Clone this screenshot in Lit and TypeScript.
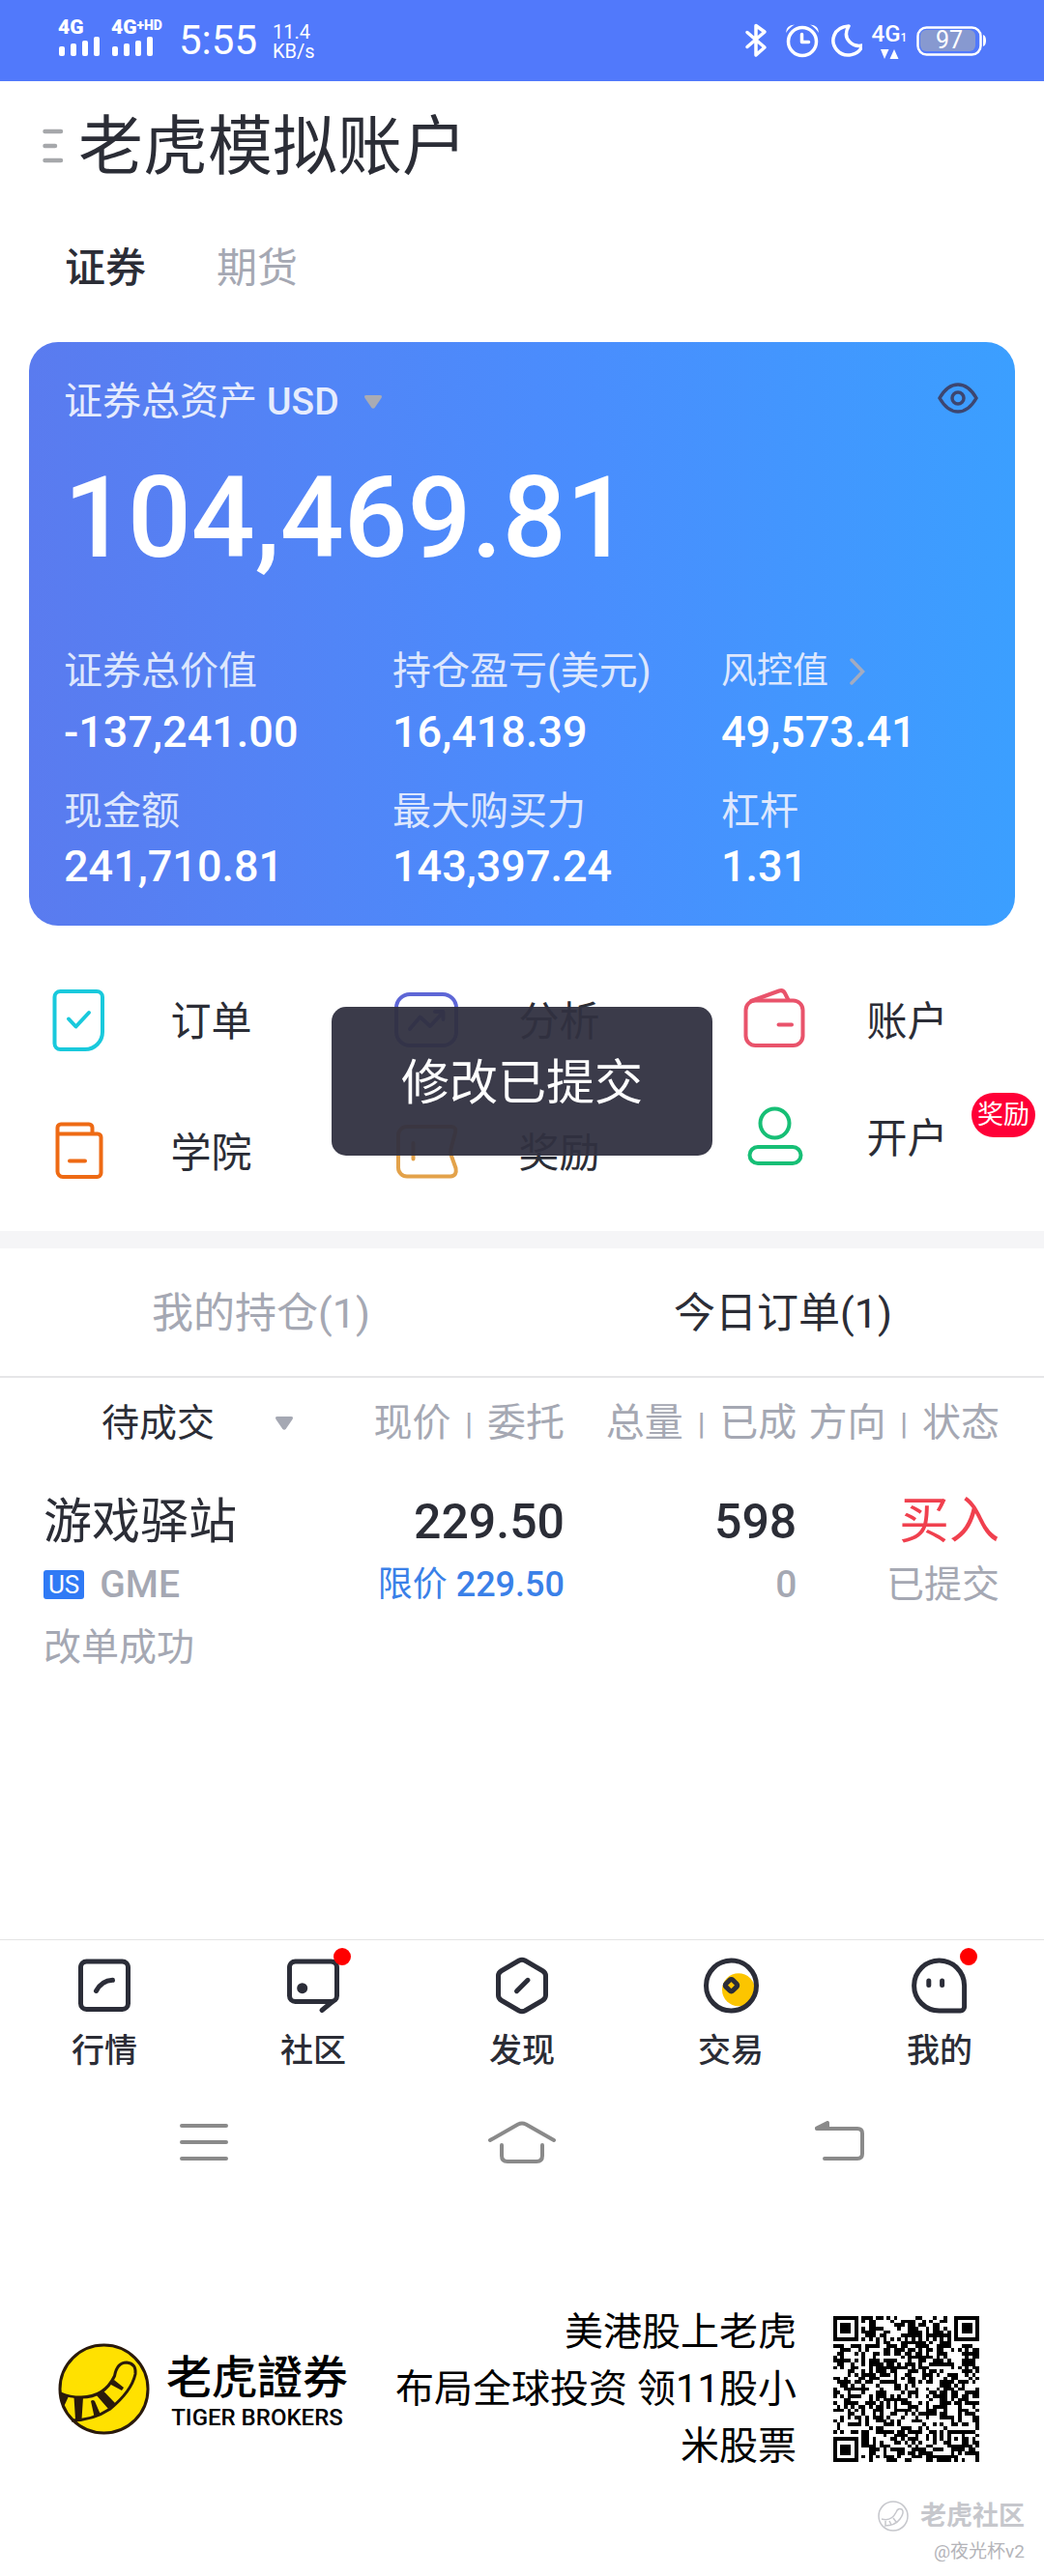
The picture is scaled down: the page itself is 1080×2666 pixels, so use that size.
import { LitElement, html, css, svg } from "lit";
import { customElement, property, state } from "lit/decorators.js";
import { classMap } from "lit/directives/class-map.js";

const actionIcons: Record<string, unknown> = {
  order: svg`<g stroke="#19c9dc"><path d="M17.500 6H55a6 6 0 0 1 6 6V48a18 18 0 0 1-18 18H17.500a6 6 0 0 1-6-6V12a6 6 0 0 1 6-6z"/><path d="M26 34.500L33.500 42.500 47 28"/></g>`,
  analysis: svg`<g stroke="#5e66d6"><rect x="5" y="9" width="62" height="53" rx="14"/><path d="M19 45L29.500 32.500 40 42 53 28M45 27H53.500V35"/></g>`,
  account: svg`<g stroke="#e9536b"><rect x="6.500" y="15.500" width="59" height="46.500" rx="10"/><path d="M12 16L41 5.500Q45 4 47 8L50.500 15M40.500 40.500H54"/></g>`,
  academy: svg`<g stroke="#ee6a14"><path d="M14.500 54V11a3.500 3.500 0 0 1 3.500-3.500H47a3.500 3.500 0 0 1 3.500 3.500V17.500M14.500 17.500H56a3.500 3.500 0 0 1 3.500 3.500V58a4 4 0 0 1-4 4H20a5.500 5.500 0 0 1-5.500-5.500V17.500M27 45.500H43"/></g>`,
  reward: svg`<g stroke="#e3a24a"><path d="M16 10H62Q67.500 10.500 66 16L61.500 33Q60.700 36 61.500 39L66.500 53Q68 61 61 61.500H16a9 9 0 0 1-9-9V19a9 9 0 0 1 9-9zM22.500 27V43.500"/></g>`,
  open: svg`<g stroke="#17bf76"><circle cx="36.500" cy="21.500" r="15"/><rect x="10.500" y="46" width="53" height="17" rx="8.500"/></g>`,
};

const navIcons: Record<string, unknown> = {
  quotes: svg`<rect x="5.500" y="5" width="49" height="49.500" rx="6"/><path d="M21.500 35.500Q27 25 38.500 24.300"/>`,
  community: svg`<rect x="5.500" y="5" width="49" height="41.500" rx="6"/><path d="M50 46.500L39 55.500"/><circle class="solid" cx="18.700" cy="32.700" r="5.500"/>`,
  discover: svg`<path d="M27 4Q30 2.500 33 4L51 14.500Q54.500 16.500 54.500 20V40Q54.500 43.500 51 45.500L33 56Q30 57.500 27 56L9 45.500Q5.500 43.500 5.500 40V20Q5.500 16.500 9 14.500z"/><path d="M24.500 35.700L36 24.300"/>`,
  trade: svg`<circle class="coin" cx="38" cy="34.300" r="17"/><circle cx="30.500" cy="30" r="26"/><rect x="25.500" y="24.700" width="10" height="10" rx="2" transform="rotate(45 30.500 29.700)"/>`,
  mine: svg`<path d="M29.600 4A26 26 0 0 1 55.600 30V52a4 4 0 0 1-4 4H29.600A26 26 0 0 1 29.600 4z"/><path d="M18.800 25V29.500M32.600 25V29.500"/>`,
};

@customElement("status-bar")
class StatusBar extends LitElement {
  static styles = css`
    :host {
      display: flex;
      align-items: center;
      justify-content: space-between;
      height: 84px;
      padding: 0 60px;
      background: #5179fb;
      color: #fff;
      font-family: Roboto, "Liberation Sans", sans-serif;
    }
    .left, .right { display: flex; align-items: center; }
    .right { gap: 10px; }
    .signal { display: flex; flex-direction: column; width: 55px; margin-top: -7px; }
    .net { font-size: 21px; line-height: 19px; font-weight: 900; white-space: nowrap; }
    .net sup { font-size: 14px; line-height: 14px; vertical-align: top; }
    .time { margin-left: 15px; font-size: 42px; line-height: 84px; }
    .speed { margin-left: 16px; font-size: 20px; line-height: 20px; padding-top: 2px; }
    .mobile { width: 36px; display: flex; flex-direction: column; align-items: center; }
    .mobile span { font-size: 24px; line-height: 24px; font-weight: 500; white-space: nowrap; }
    .mobile small { font-size: 12px; }
    svg { display: block; fill: none; stroke: #fff; stroke-width: 3.5; stroke-linecap: round; stroke-linejoin: round; }
    .fill { fill: #fff; stroke: none; }
    .battery { position: relative; }
    .level {
      position: absolute;
      inset: 0 4px 0 0;
      font-size: 25px;
      line-height: 32px;
      text-align: center;
    }
  `;

  private bars() {
    return html`<svg width="44" height="20" viewBox="0 0 44 20" aria-hidden="true">
      <g class="fill"><rect x="1" y="10" width="6" height="10" rx="2"/><rect x="13" y="7" width="6" height="13" rx="2"/><rect x="25" y="4" width="6" height="16" rx="2"/><rect x="37" y="0" width="6" height="20" rx="2"/></g>
    </svg>`;
  }

  render() {
    return html`
      <div class="left">
        <div class="signal"><span class="net">4G</span>${this.bars()}</div>
        <div class="signal"><span class="net">4G<sup>+HD</sup></span>${this.bars()}</div>
        <span class="time">5:55</span>
        <span class="speed">11.4<br />KB/s</span>
      </div>
      <div class="right">
        <svg width="32" height="38" viewBox="0 0 32 38" aria-label="蓝牙"><path d="M3 10.500L21 26 12 34V3.500L21 10 3 25.500"/></svg>
        <svg width="36" height="38" viewBox="0 0 36 38" aria-label="闹钟"><circle cx="18" cy="20" r="14.500"/><path d="M17.500 12.500V20.500H24.500"/><path class="fill" d="M1 11Q1 3 10 2.500Q5 5 1 11zM35 11Q35 3 26 2.500Q31 5 35 11z"/></svg>
        <svg width="34" height="38" viewBox="0 0 34 38" aria-label="勿扰"><path d="M20 4C4 5 0 20 8 29C16 38 31 34 34 24C25 26 12 18 20 4z"/></svg>
        <div class="mobile">
          <span>4G<small>1</small></span>
          <svg width="20" height="10" viewBox="0 0 20 10" aria-hidden="true"><path class="fill" d="M1 0H9.500L5 10zM10.500 10L15 0 19.500 10z"/></svg>
        </div>
        <div class="battery">
          <svg width="72" height="32" viewBox="0 0 72 32" aria-hidden="true">
            <rect x="4" y="5" width="57" height="22" rx="6" fill="#8799d0" stroke="none"/>
            <rect x="1.500" y="2.500" width="65" height="28" rx="9" stroke-width="2.500"/>
            <path class="fill" d="M69 10Q72 11 72 16T69 22z"/>
          </svg>
          <span class="level">97</span>
        </div>
      </div>
    `;
  }
}

@customElement("asset-card")
class AssetCard extends LitElement {
  static styles = css`
    :host {
      display: block;
      margin: 0 30px;
      padding: 32px 0 33px;
      border-radius: 30px;
      background: linear-gradient(90deg, #5a7bef, #4a8dfd 55%, #3b9fff);
      color: #fff;
      font-family: Roboto, "Noto Sans CJK SC", sans-serif;
    }
    .top { display: flex; align-items: center; justify-content: space-between; padding: 0 38px 0 36px; line-height: 60px; }
    label { display: flex; align-items: center; font-size: 40px; color: #e6ecfd; }
    select {
      appearance: none;
      border: 0;
      padding: 0;
      margin: 0 26px 0 10px;
      background: none;
      color: inherit;
      font: 500 39px/60px Roboto, sans-serif;
    }
    button { border: 0; padding: 0; background: none; }
    svg { display: block; }
    .total { padding: 0 36px; margin: 30px 0 70px; font-size: 116px; line-height: 120px; font-weight: 500; }
    dl { display: grid; grid-template-columns: repeat(3, 1fr); margin: 0; row-gap: 25px; }
    .item { padding-left: 36px; line-height: 57px; }
    .item.lead { display: grid; row-gap: 6px; }
    dt { display: flex; align-items: center; gap: 22px; font-size: 40px; color: #dde7fd; white-space: nowrap; }
    dt.compact { font-size: 37px; }
    dd { margin: 0; font-size: 45px; font-weight: 500; }
  `;

  private items = [
    ["证券总价值", "-137,241.00"],
    ["持仓盈亏(美元)", "16,418.39"],
    ["风控值", "49,573.41"],
    ["现金额", "241,710.81"],
    ["最大购买力", "143,397.24"],
    ["杠杆", "1.31"],
  ];

  render() {
    return html`
      <div class="top">
        <label>证券总资产
          <select><option>USD</option></select>
          <svg width="18" height="14" viewBox="0 0 18 14" aria-hidden="true"><path d="M2 0H16Q19 0 17.500 3L11 12.500Q9 15 7 12.500L.5 3Q-1 0 2 0z" fill="#a9abb4"/></svg>
        </label>
        <button aria-label="隐藏金额">
          <svg width="42" height="40" viewBox="0 0 42 40" fill="none" stroke="#3d4670" stroke-width="3.500"><path d="M2 16Q10 2 21 2T40 16Q32 30 21 30T2 16z"/><circle cx="21" cy="16" r="6"/></svg>
        </button>
      </div>
      <div class="total">104,469.81</div>
      <dl>
        ${this.items.map(
          ([label, value], i) => html`<div class=${classMap({ item: true, lead: i < 3 })}>
            <dt class=${classMap({ compact: label === "风控值" })}>${label}${label === "风控值"
              ? html`<svg width="16" height="28" viewBox="0 0 16 28" fill="none" stroke="#a3abc0" stroke-width="3.500" stroke-linecap="round"><path d="M2 2L13.500 14 2 26"/></svg>`
              : ""}</dt>
            <dd>${value}</dd>
          </div>`,
        )}
      </dl>
    `;
  }
}

@customElement("quick-actions")
class QuickActions extends LitElement {
  static styles = css`
    :host {
      position: relative;
      display: grid;
      grid-template-columns: repeat(3, 1fr);
      grid-auto-rows: 136px;
      padding: 30px 0 14px;
      color: #2b2d36;
      font-family: Roboto, "Noto Sans CJK SC", sans-serif;
    }
    a { position: relative; display: grid; grid-template-columns: 49% 51%; align-items: center; color: inherit; text-decoration: none; font-size: 42px; line-height: 60px; }
    a.raised { height: 106px; }
    .label { padding-top: 3px; }
    svg { display: block; margin-left: 45px; fill: none; stroke-width: 4; stroke-linecap: round; stroke-linejoin: round; }
    .badge {
      position: absolute;
      right: 9px;
      top: 7px;
      padding: 0 6px;
      border-radius: 23px;
      background: #ff0037;
      color: #fff;
      font-size: 27px;
      line-height: 46px;
    }
    .toast {
      position: absolute;
      left: 50%;
      top: 84px;
      transform: translateX(-50%);
      padding: 49px 72px 45px;
      border-radius: 15px;
      background: rgba(48, 48, 64, 0.95);
      color: #fff;
      font-size: 50px;
      line-height: 60px;
      white-space: nowrap;
    }
  `;

  private actions = [
    { icon: "order", label: "订单" },
    { icon: "analysis", label: "分析" },
    { icon: "account", label: "账户" },
    { icon: "academy", label: "学院" },
    { icon: "reward", label: "奖励" },
    { icon: "open", label: "开户", badge: "奖励" },
  ];

  render() {
    return html`
      ${this.actions.map(
        (a) => html`<a href="#${a.icon}" class=${classMap({ raised: !!a.badge })}>
          <svg width="72" height="72" viewBox="0 0 72 72" aria-hidden="true">${actionIcons[a.icon]}</svg>
          <span class="label">${a.label}</span>
          ${a.badge ? html`<span class="badge">${a.badge}</span>` : ""}
        </a>`,
      )}
      <div class="toast" role="status">修改已提交</div>
    `;
  }
}

@customElement("order-panel")
class OrderPanel extends LitElement {
  static styles = css`
    :host { display: block; border-top: 18px solid #f5f5f7; color: #2b2d36; font-family: Roboto, "Noto Sans CJK SC", sans-serif; }
    .tabs { display: grid; grid-template-columns: 1fr 1fr; border-bottom: 2px solid #e6e6e8; }
    .tabs button { border: 0; padding: 2px 0 0; background: none; font: inherit; font-size: 43px; line-height: 130px; color: #a5a8b3; }
    .tabs button.active { color: #2b2d36; }
    .list { padding: 0 46px 0 45px; }
    table { width: 100%; table-layout: fixed; border-collapse: collapse; }
    th, td { padding: 0; text-align: right; font-weight: 400; white-space: nowrap; }
    th { height: 94px; font-size: 40px; line-height: 60px; color: #a5a8b3; }
    td { padding-top: 25px; vertical-align: top; line-height: 60px; }
    th:first-child, td:first-child { text-align: left; width: 30%; }
    th:nth-child(2) { width: 24.5%; }
    th:nth-child(3) { width: 24.3%; }
    .sep { margin: 0 5px; font-size: 31px; font-weight: 500; vertical-align: 2px; }
    .filter { display: flex; align-items: center; gap: 62px; padding-left: 60px; }
    select { appearance: none; border: 0; padding: 0; background: none; font: 400 39px/60px Roboto, "Noto Sans CJK SC", sans-serif; color: #2b2d36; }
    .main { font-size: 50px; }
    .num { font-weight: 500; }
    .sub { margin-top: 5px; font-size: 39px; color: #a5a8b3; }
    .buy { color: #f0404e; font-size: 52px; }
    .limit { color: #3a80e8; font-size: 36px; }
    .symbol { display: flex; align-items: center; gap: 16px; font-weight: 500; }
    .market { padding: 0 5px; border-radius: 3px; background: #2f7af5; color: #fff; font-size: 26px; line-height: 30px; font-weight: 400; }
  `;

  @property({ attribute: false }) orders = [
    { name: "游戏驿站", market: "US", symbol: "GME", note: "改单成功", price: "229.50", limit: "229.50", total: "598", filled: "0", side: "买入", status: "已提交" },
  ];

  @state() private tab = 1;

  private columns = [
    ["现价", "委托"],
    ["总量", "已成"],
    ["方向", "状态"],
  ];

  render() {
    return html`
      <div class="tabs" role="tablist">
        ${["我的持仓(1)", "今日订单(1)"].map(
          (t, i) => html`<button role="tab" aria-selected=${this.tab === i} class=${classMap({ active: this.tab === i })} @click=${() => (this.tab = i)}>${t}</button>`,
        )}
      </div>
      <div class="list">
        <table>
          <thead>
            <tr>
              <th scope="col"><label class="filter"><select aria-label="订单状态"><option>待成交</option></select>
                <svg width="18" height="14" viewBox="0 0 18 14" aria-hidden="true"><path d="M2 0H16Q19 0 17.500 3L11 12.500Q9 15 7 12.500L.5 3Q-1 0 2 0z" fill="#a5a8b3"/></svg></label></th>
              ${this.columns.map(([a, b]) => html`<th scope="col">${a} <span class="sep">|</span> ${b}</th>`)}
            </tr>
          </thead>
          <tbody>
            ${this.orders.map(
              (o) => html`<tr>
                <td>
                  <div class="main">${o.name}</div>
                  <div class="sub symbol"><span class="market">${o.market}</span>${o.symbol}</div>
                  <div class="sub">${o.note}</div>
                </td>
                <td><div class="main num">${o.price}</div><div class="sub limit">限价 <span class="num">${o.limit}</span></div></td>
                <td><div class="main num">${o.total}</div><div class="sub num">${o.filled}</div></td>
                <td><div class="main buy">${o.side}</div><div class="sub">${o.status}</div></td>
              </tr>`,
            )}
          </tbody>
        </table>
      </div>
    `;
  }
}

@customElement("bottom-nav")
class BottomNav extends LitElement {
  static styles = css`
    :host { display: block; color: #2b2d36; font-family: "Noto Sans CJK SC", sans-serif; }
    nav { display: grid; grid-template-columns: repeat(5, 1fr); border-top: 1px solid #e4e4e4; padding: 17px 0 2px; }
    a { display: flex; flex-direction: column; align-items: center; gap: 15px; color: inherit; text-decoration: none; font-size: 34px; line-height: 40px; font-weight: 500; }
    .icon { position: relative; }
    svg { display: block; fill: none; stroke: #2b2d38; stroke-width: 5; stroke-linecap: round; stroke-linejoin: round; }
    .solid { fill: #2b2d38; stroke: none; }
    .coin { fill: #fcc500; stroke: none; }
    .dot { position: absolute; left: 51px; top: -9px; width: 18px; height: 18px; border-radius: 50%; background: #f00; }
    .system { display: flex; justify-content: space-between; align-items: center; height: 150px; padding: 0 185px 0 186px; }
    .system button { border: 0; padding: 0; background: none; }
    .system svg { stroke: #8a8a8a; stroke-width: 4; }
  `;

  private items = [
    { icon: "quotes", label: "行情" },
    { icon: "community", label: "社区", dot: true },
    { icon: "discover", label: "发现" },
    { icon: "trade", label: "交易" },
    { icon: "mine", label: "我的", dot: true },
  ];

  render() {
    return html`
      <nav>
        ${this.items.map(
          (n) => html`<a href="#${n.icon}">
            <span class="icon"><svg width="60" height="60" viewBox="0 0 60 60" aria-hidden="true">${navIcons[n.icon]}</svg>${n.dot ? html`<span class="dot"></span>` : ""}</span>
            ${n.label}
          </a>`,
        )}
      </nav>
      <div class="system">
        <button aria-label="最近任务"><svg width="50" height="44" viewBox="0 0 50 44"><path d="M2 5H48M2 22H48M2 39H48"/></svg></button>
        <button aria-label="主屏幕"><svg width="72" height="44" viewBox="0 0 72 44"><path d="M3 20L32 3.500Q36 1.500 40 3.500L69 20M15 25V36Q15 42 21 42H51Q57 42 57 36V25"/></svg></button>
        <button aria-label="返回"><svg width="52" height="44" viewBox="0 0 52 44"><path d="M2 8H44Q49 8 49 13V34Q49 39 44 39H10"/><path d="M2 7.500L13 2V8z" fill="#8a8a8a"/></svg></button>
      </div>
    `;
  }
}

const QR_SIZE = 41;

/** Dark modules of the data area plus timing and alignment patterns; finders are drawn apart. */
function qrPath(): string {
  let seed = 29;
  let d = "";
  const finder = (x: number, y: number) => (x < 8 && y < 8) || (x > 32 && y < 8) || (x < 8 && y > 32);
  for (let y = 0; y < QR_SIZE; y++) {
    for (let x = 0; x < QR_SIZE; x++) {
      seed = (seed * 1103515245 + 12345) % 2147483648;
      if (finder(x, y)) continue;
      let dark = seed / 2147483648 > 0.5;
      if (x === 6 || y === 6) dark = (x + y) % 2 === 0;
      const ring = Math.max(Math.abs(x - 34), Math.abs(y - 34));
      if (ring <= 2) dark = ring !== 1;
      if (dark) d += `M${x} ${y}h1v1h-1z`;
    }
  }
  return d;
}

@customElement("brand-footer")
class BrandFooter extends LitElement {
  static styles = css`
    :host { display: block; padding: 92px 20px 11px 60px; color: #000; font-family: Roboto, "Noto Sans CJK SC", sans-serif; }
    .banner { display: flex; align-items: center; padding-right: 47px; }
    svg { display: block; flex: none; }
    .brand { margin-left: 17px; text-align: center; }
    .name { font: 500 47px/54px "Noto Sans CJK TC", sans-serif; }
    .latin { font-size: 24px; line-height: 28px; font-weight: 500; padding-top: 4px; }
    .slogan { flex: 1; max-width: 430px; margin: 0 38px 0 auto; text-align: right; font-size: 40px; line-height: 59px; }
    .mark { margin-top: 23px; text-align: right; color: #c6c7cc; }
    .community { display: flex; justify-content: flex-end; align-items: center; gap: 12px; font-size: 27px; line-height: 40px; font-weight: 700; }
    .user { margin-top: 3px; font-size: 19px; line-height: 28px; color: #b4b4b9; }
  `;

  render() {
    return html`
      <div class="banner">
        <svg width="95" height="95" viewBox="0 0 95 95" aria-hidden="true">
          <circle cx="47.500" cy="47.500" r="45.500" fill="#ffe100" stroke="#2a1a0c" stroke-width="3"/>
          <path d="M3 52Q12 56 24 56Q48 56 58.500 34Q61 20 71 20Q81 21 80 32Q76 50 53.600 68.300Q36 80 14 80" fill="none" stroke="#2a1a0c" stroke-width="3"/>
          <path d="M2.700 51L11 55 5 68zM16.500 56H26L24.500 79H18zM34 60Q36 58 38 60L44 74 37.500 76zM39 53L47.500 50 59.500 62.500 52 68zM53 42L58 38 68 46 66 49z" fill="#2a1a0c"/>
        </svg>
        <div class="brand"><div class="name">老虎證券</div><div class="latin">TIGER BROKERS</div></div>
        <div class="slogan">美港股上老虎<br />布局全球投资 领11股小米股票</div>
        <svg width="151" height="151" viewBox="0 0 ${QR_SIZE} ${QR_SIZE}" shape-rendering="crispEdges" role="img" aria-label="二维码">
          <path d=${qrPath()}/>
          ${[[0, 0], [34, 0], [0, 34]].map(([x, y]) => svg`<path fill-rule="evenodd" d="M${x} ${y}h7v7h-7zM${x + 1} ${y + 1}v5h5v-5zM${x + 2} ${y + 2}h3v3h-3z"/>`)}
        </svg>
      </div>
      <div class="mark">
        <div class="community">
          <svg width="32" height="32" viewBox="0 0 32 32" fill="none" stroke="#c6c7cc" stroke-width="1.500" aria-hidden="true"><circle cx="16" cy="16" r="15"/><path d="M4 19Q14 22 19 12Q21 7 25 9Q28 12 23 19Q18 26 7 26M8 21V25M12 21L14 25M16 18L19 22"/></svg>
          老虎社区
        </div>
        <div class="user">@夜光杯v2</div>
      </div>
    `;
  }
}

@customElement("app-root")
class AppRoot extends LitElement {
  static styles = css`
    :host { display: flex; flex-direction: column; min-height: 100vh; background: #fff; color: #2b2d36; font-family: Roboto, "Noto Sans CJK SC", sans-serif; }
    header { display: flex; align-items: center; gap: 15px; padding: 35px 44px 0; }
    header button { border: 0; padding: 0 0 3px; background: none; }
    svg { display: block; }
    h1 { margin: 0; font-size: 67px; line-height: 67px; font-weight: 400; }
    .kinds { display: flex; gap: 73px; padding: 62px 67px 46px; }
    .kinds button { border: 0; padding: 0; background: none; font: inherit; font-size: 42px; line-height: 60px; color: #a5a8b3; }
    .kinds .active { color: #2b2d36; font-weight: 500; }
    order-panel { flex: 1; }
  `;

  render() {
    return html`
      <status-bar></status-bar>
      <header>
        <button aria-label="菜单"><svg width="22" height="36" viewBox="0 0 22 36" stroke="#a6a8ab" stroke-width="4.500" stroke-linecap="round"><path d="M2.500 3H19M2.500 18H13M2.500 33H19"/></svg></button>
        <h1>老虎模拟账户</h1>
      </header>
      <div class="kinds" role="tablist">
        <button role="tab" aria-selected="true" class="active">证券</button>
        <button role="tab" aria-selected="false">期货</button>
      </div>
      <asset-card></asset-card>
      <quick-actions></quick-actions>
      <order-panel></order-panel>
      <bottom-nav></bottom-nav>
      <brand-footer></brand-footer>
    `;
  }
}
